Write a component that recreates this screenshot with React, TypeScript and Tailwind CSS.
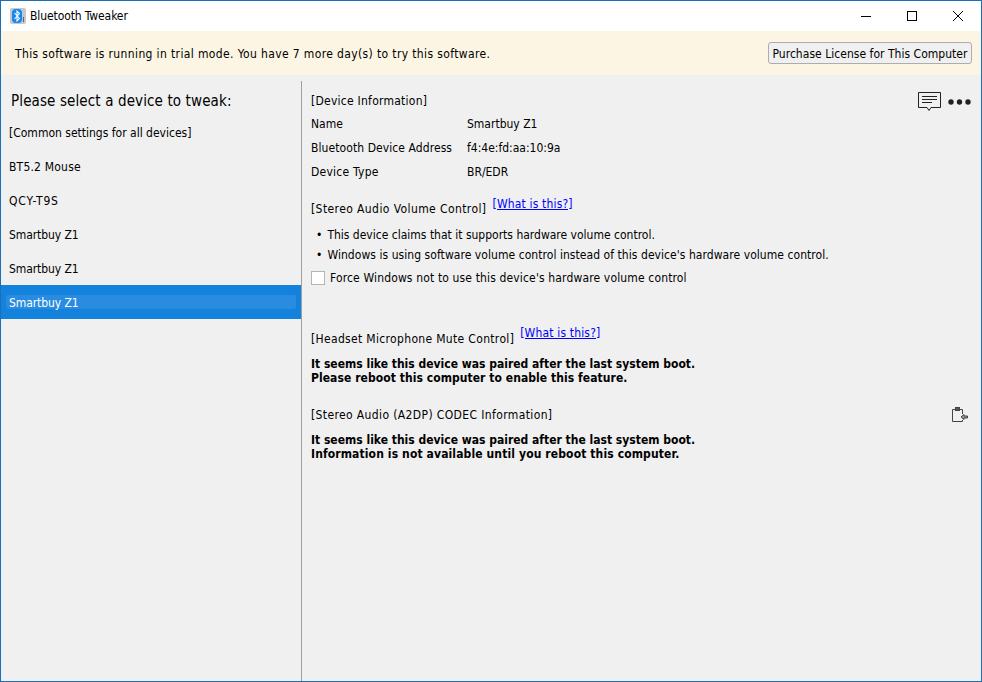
import React from "react";

const Row = ({ label, value, cls }: { label: string; value: string; cls: string }) => (
  <div className="flex h-6 items-center">
    <span className={`w-[156px] ${cls}`}>{label}</span>
    <span>{value}</span>
  </div>
);

const Link = () => (
  <a className="ml-[6px] mb-[10px] leading-[14px] tracking-[.17px] text-[#0000ff] underline">[What is this?]</a>
);

export default function App() {
  const devices = [
    { t: "[Common settings for all devices]", c: "" },
    { t: "BT5.2 Mouse", c: "tracking-[.2px]" },
    { t: "QCY-T9S", c: "tracking-[.8px]" },
    { t: "Smartbuy Z1", c: "tracking-[-.08px]" },
    { t: "Smartbuy Z1", c: "tracking-[-.08px]" },
    { t: "Smartbuy Z1", c: "tracking-[-.08px]" },
  ];
  return (
    <div className="flex h-[682px] w-[982px] flex-col overflow-hidden border border-[#1c6fb4] bg-[#f0f0f0] text-[12px] text-black" style={{ fontFamily: '"DejaVu Sans Condensed", "DejaVu Sans", sans-serif', fontStretch: "condensed" }}>
      <div className="flex h-[30px] shrink-0 items-center bg-white">
        <svg className="ml-[9px]" width="16" height="16" viewBox="0 0 16 16">
          <rect width="16" height="16" rx="2" fill="#c4c8cc" />
          <rect x="2" y="1" width="10" height="14" rx="4" fill="#1488ee" />
          <path d="M4.5 5 L9.5 10.5 L7 13 V3 L9.5 5.5 L4.5 11" fill="none" stroke="#fff" strokeWidth="1.1" />
          <rect x="13" y="9" width="1" height="5" fill="#666" />
        </svg>
        <span className="ml-[4px] tracking-[-.1px]">Bluetooth Tweaker</span>
        <div className="ml-auto flex h-full items-center">
          <div className="flex h-full w-[46px] items-center justify-center">
            <svg width="10" height="10" viewBox="0 0 10 10"><path d="M0 5.5H10" stroke="#000" /></svg>
          </div>
          <div className="flex h-full w-[46px] items-center justify-center">
            <svg width="10" height="10" viewBox="0 0 10 10"><rect x=".5" y=".5" width="9" height="9" fill="none" stroke="#000" /></svg>
          </div>
          <div className="flex h-full w-[46px] items-center justify-center">
            <svg width="10" height="10" viewBox="0 0 10 10"><path d="M0 0L10 10M10 0L0 10" stroke="#000" /></svg>
          </div>
        </div>
      </div>

      <div className="flex h-[44px] shrink-0 items-center justify-between bg-[#fcf5e3] pl-[14px] pr-[9px]">
        <span className="pt-[1px] tracking-[.37px]">This software is running in trial mode. You have 7 more day(s) to try this software.</span>
        <button className="h-[22px] w-[204px] whitespace-nowrap rounded-[3px] border border-[#adadad] bg-[#f0f0f0] pt-[1px] text-center tracking-[.03px]">Purchase License for This Computer</button>
      </div>

      <div className="flex min-h-0 flex-1">
        <aside className="flex w-[300px] shrink-0 flex-col">
          <div className="flex h-[40px] shrink-0 items-end pb-[4px] pl-[10px] text-[15px] leading-[20px] tracking-[.12px]">Please select a device to tweak:</div>
          {devices.map((d, i) =>
            i === 5 ? (
              <div key={i} className="flex h-[34px] items-center bg-[#1282dd] px-[5px] text-white">
                <div className={`flex h-[14px] w-full items-center rounded-[2px] bg-[#2a8ce0] pl-[3px] pt-[2px] ${d.c}`}>{d.t}</div>
              </div>
            ) : (
              <div key={i} className={`flex h-[34px] items-center pl-[8px] pt-[2px] ${d.c}`}>{d.t}</div>
            )
          )}
        </aside>
        <div className="mt-[6px] w-px shrink-0 bg-[#a0a0a0]" />
        <main className="relative min-w-0 flex-1 pl-[9px] pt-[13px]">
          <div className="absolute right-[10px] top-[17px] flex items-center gap-[7px]">
            <svg width="23" height="20" viewBox="0 0 23 20" fill="none" stroke="#222">
              <path d="M.5 .5H22.5V15.5H13L11 18.5L9 15.5H.5Z" />
              <path d="M4 4.5H19M4 7.5H19M4 10.5H14" />
            </svg>
            <svg width="23" height="6" viewBox="0 0 23 6" fill="#222">
              <circle cx="3" cy="3" r="2.7" /><circle cx="11.5" cy="3" r="2.7" /><circle cx="20" cy="3" r="2.7" />
            </svg>
          </div>

          <div className="h-[24px] pt-[1px] leading-[24px] tracking-[.25px]">[Device Information]</div>
          <Row label="Name" value="Smartbuy Z1" cls="" />
          <Row label="Bluetooth Device Address" value="f4:4e:fd:aa:10:9a" cls="tracking-[.08px]" />
          <Row label="Device Type" value="BR/EDR" cls="tracking-[.25px]" />

          <div className="mt-[13px] flex h-[24px] items-center">
            <span className="tracking-[.41px]">[Stereo Audio Volume Control]</span>
            <Link />
          </div>
          <div className="mt-[4px] flex h-[20px] items-center pl-[5px]"><span className="mr-[5px]">•</span>This device claims that it supports hardware volume control.</div>
          <div className="flex h-[20px] items-center pl-[5px] tracking-[.055px]"><span className="mr-[5px]">•</span>Windows is using software volume control instead of this device's hardware volume control.</div>
          <div className="mt-[3px] flex h-[20px] items-center">
            <div className="h-[14px] w-[14px] border border-[#b5b5b5] bg-white" />
            <span className="ml-[5px] tracking-[.145px]">Force Windows not to use this device's hardware volume control</span>
          </div>

          <div className="mt-[39px] flex h-[24px] items-center">
            <span className="tracking-[.33px]">[Headset Microphone Mute Control]</span>
            <a className="ml-[6px] mb-[12px] leading-[14px] tracking-[.17px] text-[#0000ff] underline">[What is this?]</a>
          </div>
          <div className="mt-[6px] font-bold leading-[14px]">It seems like this device was paired after the last system boot.<br /><span className="tracking-[.06px]">Please reboot this computer to enable this feature.</span></div>

          <div className="relative mt-[18px] flex h-[24px] items-center">
            <span className="tracking-[.38px]">[Stereo Audio (A2DP) CODEC Information]</span>
            <svg className="absolute right-[12px] top-[3px]" width="18" height="17" viewBox="0 0 18 17" fill="none" stroke="#444">
              <path d="M4 3.5H1.5V15.5H11.5V14M9 3.5H11.5V8" />
              <rect x="4.5" y="1.5" width="4" height="3" fill="#555" />
              <path d="M10 11L13 8.5V10H16.5V12H13V13.5Z" fill="#999" />
            </svg>
          </div>
          <div className="mt-[6px] font-bold leading-[14px]">It seems like this device was paired after the last system boot.<br /><span className="tracking-[.12px]">Information is not available until you reboot this computer.</span></div>
        </main>
      </div>
    </div>
  );
}
